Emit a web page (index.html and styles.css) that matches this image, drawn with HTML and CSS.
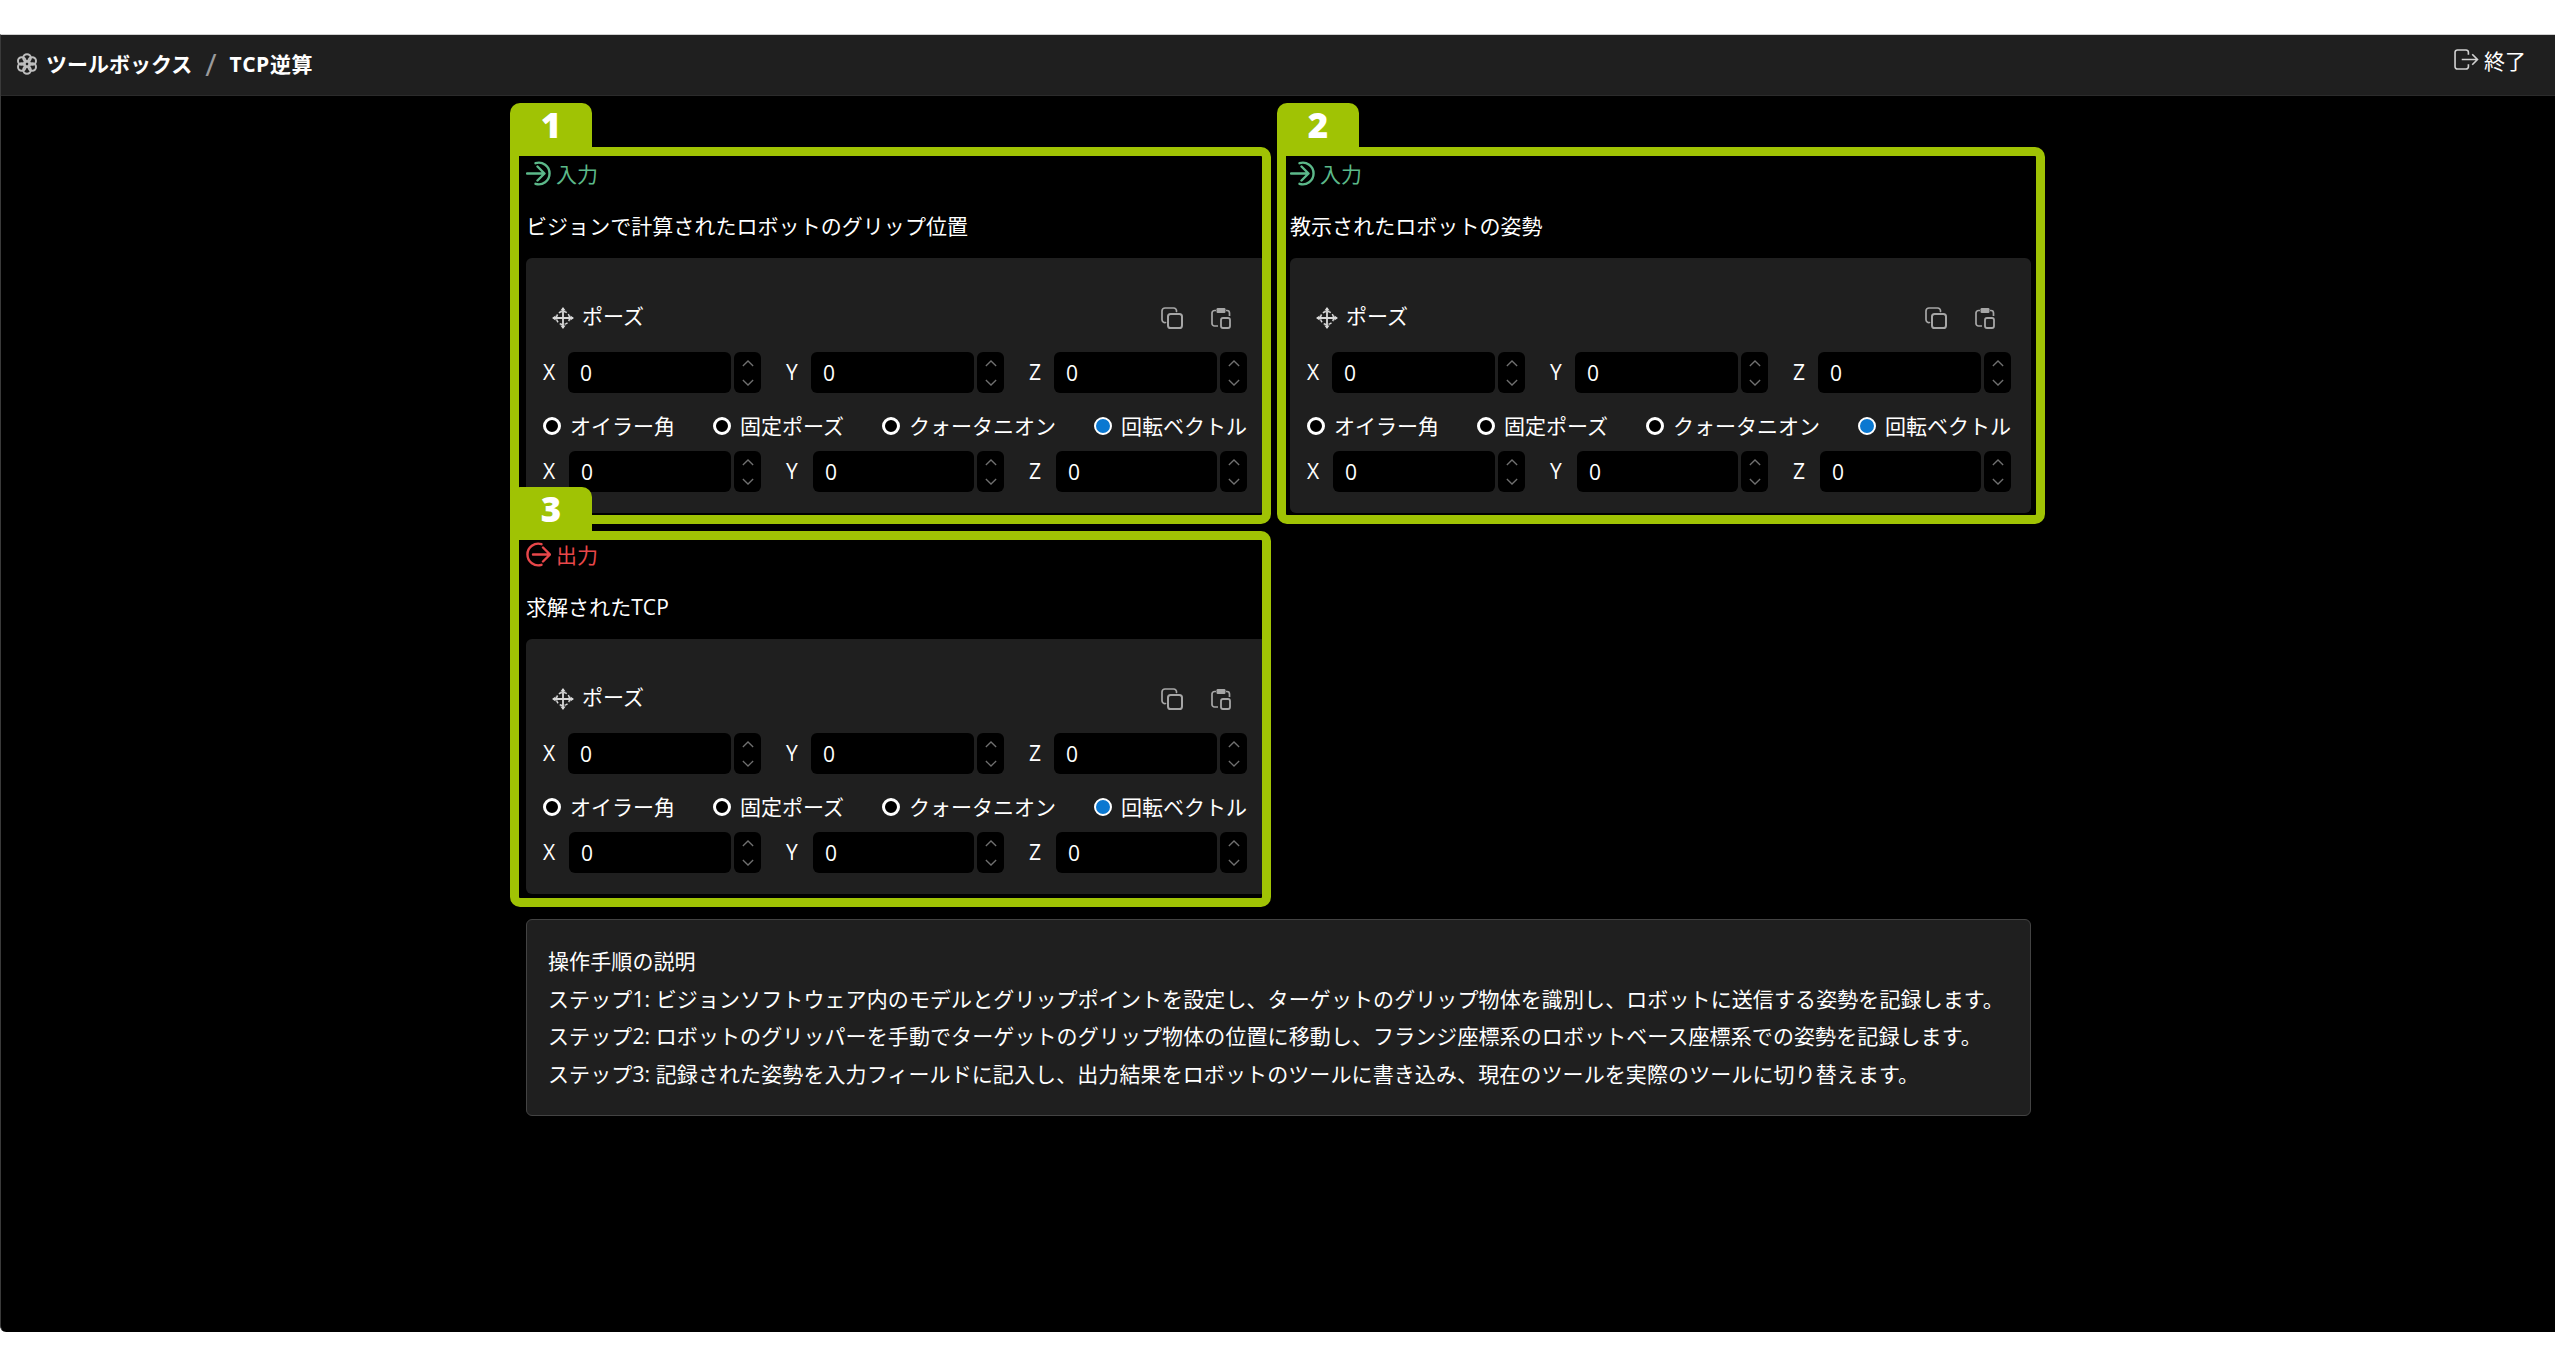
FILE: index.html
```html
<!DOCTYPE html>
<html lang="ja">
<head>
<meta charset="utf-8">
<title>TCP逆算</title>
<link rel="stylesheet" href="styles.css">
</head>
<body>
<svg class="defs" width="0" height="0" aria-hidden="true">
  <symbol id="i-up" viewBox="0 0 14 8"><path d="M1 7 7 1l6 6" fill="none" stroke="currentColor" stroke-width="1.5"/></symbol>
  <symbol id="i-down" viewBox="0 0 14 8"><path d="M1 1l6 6 6-6" fill="none" stroke="currentColor" stroke-width="1.5"/></symbol>
  <symbol id="i-in" viewBox="0 0 25 25"><path d="M9.5 2.2a10.8 10.8 0 1 1 0 20.6M1 12.5h17M11.5 5.5l7 7-7 7" fill="none" stroke="currentColor" stroke-width="2.4" stroke-linecap="round" stroke-linejoin="round"/></symbol>
  <symbol id="i-out" viewBox="0 0 25 25"><path d="M15.5 2.2a10.8 10.8 0 1 0 0 20.600M7 12.500h17M17 5.500l7 7-7 7" fill="none" stroke="currentColor" stroke-width="2.400" stroke-linecap="round" stroke-linejoin="round"/></symbol>
  <symbol id="i-pose" viewBox="0 0 22 22"><circle cx="11" cy="11" r="6.500" fill="none" stroke="currentColor" stroke-width="1.500" stroke-dasharray="3.200 1.900"/><path d="M11 1v20M1 11h20" stroke="currentColor" stroke-width="1.800"/><path d="M11 0l2.600 3.600H8.400zM11 22l2.600-3.600H8.400zM0 11l3.600-2.600v5.200zM22 11l-3.600-2.600v5.200z" fill="currentColor"/></symbol>
  <symbol id="i-copy" viewBox="0 0 22 22"><path d="M4.500 15.500A3 3 0 0 1 1 12.500V4a3 3 0 0 1 3-3h8.500a3 3 0 0 1 3 3.500" fill="none" stroke="currentColor" stroke-width="1.700" stroke-linecap="round"/><rect x="7" y="7" width="14" height="14" rx="2.600" fill="none" stroke="currentColor" stroke-width="2"/></symbol>
  <symbol id="i-paste" viewBox="0 0 20 22"><path d="M5 3.500H3.500A2.500 2.500 0 0 0 1 6v10.500A2.500 2.500 0 0 0 3.500 19H7M15 3.500h1A2.500 2.500 0 0 1 18.500 6v3" fill="none" stroke="currentColor" stroke-width="1.700"/><rect x="5.500" y="1" width="9" height="5" rx="1.200" fill="currentColor"/><rect x="10" y="11" width="9" height="10" rx="2" fill="none" stroke="currentColor" stroke-width="1.800"/></symbol>
  <symbol id="i-exit" viewBox="0 0 26 22"><path d="M15 6V3.500A2.500 2.500 0 0 0 12.500 1H3.500A2.500 2.500 0 0 0 1 3.500v15A2.500 2.500 0 0 0 3.500 21h9a2.500 2.500 0 0 0 2.500-2.500V16" fill="none" stroke="currentColor" stroke-width="1.700"/><path d="M8 11h16M19 5.500l5.500 5.500-5.500 5.500" fill="none" stroke="currentColor" stroke-width="1.700"/></symbol>
  <symbol id="i-logo" viewBox="0 0 22 22"><g fill="none" stroke="currentColor" stroke-width="2"><circle cx="11" cy="11" r="3"/><circle cx="11" cy="5" r="3.800"/><circle cx="11" cy="17" r="3.800"/><circle cx="5.800" cy="8" r="3.800"/><circle cx="16.200" cy="8" r="3.800"/><circle cx="5.800" cy="14" r="3.800"/><circle cx="16.200" cy="14" r="3.800"/></g></symbol>
</svg>

<div class="app">
  <header class="topbar">
    <nav class="crumbs">
      <svg class="logo"><use href="#i-logo"/></svg>
      <span class="crumb">ツールボックス</span>
      <span class="crumb-sep">/</span>
      <span class="crumb crumb-page">TCP逆算</span>
    </nav>
    <a class="exit"><svg class="exit-icon"><use href="#i-exit"/></svg><span>終了</span></a>
  </header>

  <main class="content">
    <div class="cards">
      <section class="card">
        <div class="tag tag-in"><svg class="tag-icon"><use href="#i-in"/></svg><span>入力</span></div>
        <p class="desc">ビジョンで計算されたロボットのグリップ位置</p>
        <div class="panel">
          <div class="pose-head">
            <svg class="pose-icon"><use href="#i-pose"/></svg>
            <span class="pose-title">ポーズ</span>
            <svg class="copy-icon"><use href="#i-copy"/></svg>
            <svg class="paste-icon"><use href="#i-paste"/></svg>
          </div>
          <div class="num-row">
            <div class="num"><label class="axis">X</label><input class="field" type="text" value="0"><span class="spin"><svg><use href="#i-up"/></svg><svg><use href="#i-down"/></svg></span></div>
            <div class="num"><label class="axis">Y</label><input class="field" type="text" value="0"><span class="spin"><svg><use href="#i-up"/></svg><svg><use href="#i-down"/></svg></span></div>
            <div class="num"><label class="axis">Z</label><input class="field" type="text" value="0"><span class="spin"><svg><use href="#i-up"/></svg><svg><use href="#i-down"/></svg></span></div>
          </div>
          <div class="radios">
            <span class="radio"><i class="dot"></i>オイラー角</span>
            <span class="radio"><i class="dot"></i>固定ポーズ</span>
            <span class="radio"><i class="dot"></i>クォータニオン</span>
            <span class="radio"><i class="dot on"></i>回転ベクトル</span>
          </div>
          <div class="num-row num-row-b">
            <div class="num"><label class="axis">X</label><input class="field" type="text" value="0"><span class="spin"><svg><use href="#i-up"/></svg><svg><use href="#i-down"/></svg></span></div>
            <div class="num"><label class="axis">Y</label><input class="field" type="text" value="0"><span class="spin"><svg><use href="#i-up"/></svg><svg><use href="#i-down"/></svg></span></div>
            <div class="num"><label class="axis">Z</label><input class="field" type="text" value="0"><span class="spin"><svg><use href="#i-up"/></svg><svg><use href="#i-down"/></svg></span></div>
          </div>
        </div>
      </section>

      <section class="card">
        <div class="tag tag-in"><svg class="tag-icon"><use href="#i-in"/></svg><span>入力</span></div>
        <p class="desc">教示されたロボットの姿勢</p>
        <div class="panel">
          <div class="pose-head">
            <svg class="pose-icon"><use href="#i-pose"/></svg>
            <span class="pose-title">ポーズ</span>
            <svg class="copy-icon"><use href="#i-copy"/></svg>
            <svg class="paste-icon"><use href="#i-paste"/></svg>
          </div>
          <div class="num-row">
            <div class="num"><label class="axis">X</label><input class="field" type="text" value="0"><span class="spin"><svg><use href="#i-up"/></svg><svg><use href="#i-down"/></svg></span></div>
            <div class="num"><label class="axis">Y</label><input class="field" type="text" value="0"><span class="spin"><svg><use href="#i-up"/></svg><svg><use href="#i-down"/></svg></span></div>
            <div class="num"><label class="axis">Z</label><input class="field" type="text" value="0"><span class="spin"><svg><use href="#i-up"/></svg><svg><use href="#i-down"/></svg></span></div>
          </div>
          <div class="radios">
            <span class="radio"><i class="dot"></i>オイラー角</span>
            <span class="radio"><i class="dot"></i>固定ポーズ</span>
            <span class="radio"><i class="dot"></i>クォータニオン</span>
            <span class="radio"><i class="dot on"></i>回転ベクトル</span>
          </div>
          <div class="num-row num-row-b">
            <div class="num"><label class="axis">X</label><input class="field" type="text" value="0"><span class="spin"><svg><use href="#i-up"/></svg><svg><use href="#i-down"/></svg></span></div>
            <div class="num"><label class="axis">Y</label><input class="field" type="text" value="0"><span class="spin"><svg><use href="#i-up"/></svg><svg><use href="#i-down"/></svg></span></div>
            <div class="num"><label class="axis">Z</label><input class="field" type="text" value="0"><span class="spin"><svg><use href="#i-up"/></svg><svg><use href="#i-down"/></svg></span></div>
          </div>
        </div>
      </section>

      <section class="card">
        <div class="tag tag-out"><svg class="tag-icon"><use href="#i-out"/></svg><span>出力</span></div>
        <p class="desc">求解されたTCP</p>
        <div class="panel">
          <div class="pose-head">
            <svg class="pose-icon"><use href="#i-pose"/></svg>
            <span class="pose-title">ポーズ</span>
            <svg class="copy-icon"><use href="#i-copy"/></svg>
            <svg class="paste-icon"><use href="#i-paste"/></svg>
          </div>
          <div class="num-row">
            <div class="num"><label class="axis">X</label><input class="field" type="text" value="0"><span class="spin"><svg><use href="#i-up"/></svg><svg><use href="#i-down"/></svg></span></div>
            <div class="num"><label class="axis">Y</label><input class="field" type="text" value="0"><span class="spin"><svg><use href="#i-up"/></svg><svg><use href="#i-down"/></svg></span></div>
            <div class="num"><label class="axis">Z</label><input class="field" type="text" value="0"><span class="spin"><svg><use href="#i-up"/></svg><svg><use href="#i-down"/></svg></span></div>
          </div>
          <div class="radios">
            <span class="radio"><i class="dot"></i>オイラー角</span>
            <span class="radio"><i class="dot"></i>固定ポーズ</span>
            <span class="radio"><i class="dot"></i>クォータニオン</span>
            <span class="radio"><i class="dot on"></i>回転ベクトル</span>
          </div>
          <div class="num-row num-row-b">
            <div class="num"><label class="axis">X</label><input class="field" type="text" value="0"><span class="spin"><svg><use href="#i-up"/></svg><svg><use href="#i-down"/></svg></span></div>
            <div class="num"><label class="axis">Y</label><input class="field" type="text" value="0"><span class="spin"><svg><use href="#i-up"/></svg><svg><use href="#i-down"/></svg></span></div>
            <div class="num"><label class="axis">Z</label><input class="field" type="text" value="0"><span class="spin"><svg><use href="#i-up"/></svg><svg><use href="#i-down"/></svg></span></div>
          </div>
        </div>
      </section>
    </div>

    <section class="notes">
      <p>操作手順の説明</p>
      <p>ステップ1: ビジョンソフトウェア内のモデルとグリップポイントを設定し、ターゲットのグリップ物体を識別し、ロボットに送信する姿勢を記録します。</p>
      <p>ステップ2: ロボットのグリッパーを手動でターゲットのグリップ物体の位置に移動し、フランジ座標系のロボットベース座標系での姿勢を記録します。</p>
      <p>ステップ3: 記録された姿勢を入力フィールドに記入し、出力結果をロボットのツールに書き込み、現在のツールを実際のツールに切り替えます。</p>
    </section>

    <div class="frame frame-1"><span class="frame-tab">1</span></div>
    <div class="frame frame-2"><span class="frame-tab">2</span></div>
    <div class="frame frame-3"><span class="frame-tab">3</span></div>
  </main>
</div>
</body>
</html>
```

FILE: styles.css
```css
* { box-sizing: border-box; }

html, body {
  margin: 0;
  height: 100%;
  background: #fff;
}

body {
  padding-top: 34px;
  font-family: "Open Sans", "Noto Sans CJK JP", sans-serif;
  font-size: 21px;
  color: #fff;
  overflow: hidden;
}

.defs { position: absolute; }

.app {
  height: 1298px;
  background: #000;
  border-top: 1px solid #d0d0d0;
  border-left: 1px solid #3a3a3a;
  border-radius: 0 0 0 6px;
  overflow: hidden;
}

/* Top bar */
.topbar {
  height: 61px;
  background: #1f1f1f;
  border-bottom: 1px solid #2b2b2b;
  display: flex;
  align-items: center;
  justify-content: space-between;
  padding: 0 29px 0 15px;
}

.crumbs {
  display: flex;
  align-items: center;
  margin-top: -2px;
}

.logo {
  width: 22px;
  height: 22px;
  color: #bdbdbd;
  margin-right: 8px;
}

.crumb {
  font-weight: 700;
  line-height: 1;
}

.crumb-page { letter-spacing: 0.6px; }

.crumb-sep {
  width: 37px;
  text-align: center;
  color: #9a9a9a;
  font-size: 31px;
  line-height: 1;
}

.exit {
  display: flex;
  align-items: center;
  gap: 5px;
  margin-top: -11px;
}

.exit-icon {
  width: 25px;
  height: 21px;
  color: #d0d0d0;
}

/* Content */
.content {
  position: relative;
  width: 1505px;
  margin-left: 525px;
  padding-top: 62px;
}

.cards {
  display: grid;
  grid-template-columns: 741px 741px;
  column-gap: 23px;
  row-gap: 26px;
}

.tag {
  height: 34px;
  margin-top: -2px;
  display: flex;
  align-items: center;
  gap: 5px;
}

.tag-in { color: #5cb98a; }
.tag-out { color: #e8474a; }

.tag-icon {
  width: 25px;
  height: 25px;
}

.desc {
  margin: 20px 0 16px;
  line-height: 32px;
  letter-spacing: 0.05px;
}

.panel {
  height: 255px;
  background: #1f1f1f;
  border-radius: 6px;
  padding: 39px 20px 0 17px;
}

.pose-head {
  height: 41px;
  display: flex;
  align-items: center;
  margin-bottom: 14px;
}

.pose-icon {
  width: 22px;
  height: 22px;
  margin-left: 9px;
  margin-right: 8px;
  color: #d9d9d9;
}

.pose-title {
  flex: 1;
  line-height: 1;
  margin-top: -2px;
}

.copy-icon {
  width: 22px;
  height: 22px;
  color: #a6a6a6;
  margin-right: 28px;
}

.paste-icon {
  width: 20px;
  height: 22px;
  color: #a6a6a6;
  margin-right: 16px;
}

.num-row {
  display: grid;
  grid-template-columns: repeat(3, 218px);
  column-gap: 25px;
}

.num {
  height: 41px;
  display: flex;
  align-items: center;
}

.axis {
  width: 25px;
  flex: none;
  font-size: 21px;
  font-weight: 500;
  line-height: 1;
}

.num-row-b .num:nth-child(n+2) .axis { width: 27px; }
.num-row-b .num:first-child .axis { width: 26px; }

.field {
  flex: 1;
  min-width: 0;
  height: 41px;
  background: #000;
  border: 0;
  border-radius: 6px;
  padding: 0 12px;
  color: #fff;
  font: 21px "Open Sans", "Noto Sans CJK JP", sans-serif;
}

.spin {
  flex: none;
  width: 27px;
  height: 41px;
  margin-left: 3px;
  background: #000;
  border-radius: 6px;
  color: #707070;
  display: flex;
  flex-direction: column;
  align-items: center;
  justify-content: space-between;
  padding: 8px 0 7px;
}

.spin svg {
  width: 12px;
  height: 7px;
}

.radios {
  height: 58px;
  padding-top: 8px;
  display: flex;
  align-items: center;
  gap: 38px;
}

.radio {
  display: flex;
  align-items: center;
  gap: 9px;
  line-height: 1;
  white-space: nowrap;
}

.dot {
  width: 18px;
  height: 18px;
  border-radius: 50%;
  background: #000;
  border: 3.5px solid #fff;
}

.dot.on {
  background: #0a78d1;
  border-width: 2.5px;
}

/* Notes */
.notes {
  margin-top: 25px;
  height: 197px;
  background: #1f1f1f;
  border: 1px solid #434343;
  border-radius: 6px;
  padding: 23px 21px;
}

.notes p {
  margin: 0;
  line-height: 37.6px;
  white-space: nowrap;
  letter-spacing: 0.1px;
}

/* Numbered highlight frames drawn over the cards */
.frame {
  position: absolute;
  border: 9px solid #a0c304;
  border-radius: 10px;
  border-top-left-radius: 0;
  pointer-events: none;
}

.frame-1 { left: -16px; top: 51px; width: 761px; height: 377px; }
.frame-2 { left: 751px; top: 51px; width: 768px; height: 377px; }
.frame-3 { left: -16px; top: 435px; width: 761px; height: 376px; }

.frame-tab {
  position: absolute;
  left: -9px;
  top: -53px;
  width: 82px;
  height: 53px;
  background: #a0c304;
  border-radius: 10px 10px 0 0;
  color: #fff;
  font-family: "Open Sans", sans-serif;
  font-size: 35px;
  font-weight: 800;
  line-height: 44px;
  text-align: center;
}
```
